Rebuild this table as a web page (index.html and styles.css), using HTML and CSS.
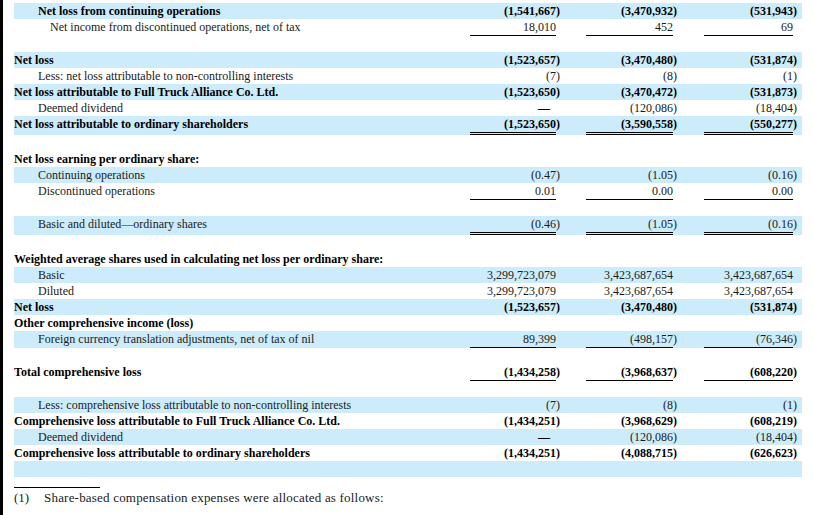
FILE: index.html
```html
<!DOCTYPE html>
<html>
<head>
<meta charset="utf-8">
<link rel="stylesheet" href="styles.css">
</head>
<body>
<div class="page">
  <div class="table">
    <div class="row shade b"><div class="lbl i1">Net loss from continuing operations</div><div class="num">(1,541,667</div><div class="par">)</div><div></div><div class="num">(3,470,932</div><div class="par">)</div><div></div><div class="num">(531,943</div><div class="par">)</div></div>
    <div class="row"><div class="lbl i2">Net income from discontinued operations, net of tax</div><div class="num ul">18,010</div><div class="par"></div><div></div><div class="num ul">452</div><div class="par"></div><div></div><div class="num ul">69</div><div class="par"></div></div>
    <div class="spacer"></div>
    <div class="row shade b"><div class="lbl">Net loss</div><div class="num">(1,523,657</div><div class="par">)</div><div></div><div class="num">(3,470,480</div><div class="par">)</div><div></div><div class="num">(531,874</div><div class="par">)</div></div>
    <div class="row"><div class="lbl i1">Less: net loss attributable to non-controlling interests</div><div class="num">(7</div><div class="par">)</div><div></div><div class="num">(8</div><div class="par">)</div><div></div><div class="num">(1</div><div class="par">)</div></div>
    <div class="row shade b"><div class="lbl">Net loss attributable to Full Truck Alliance Co. Ltd.</div><div class="num">(1,523,650</div><div class="par">)</div><div></div><div class="num">(3,470,472</div><div class="par">)</div><div></div><div class="num">(531,873</div><div class="par">)</div></div>
    <div class="row"><div class="lbl i1">Deemed dividend</div><div class="num dash">—</div><div class="par"></div><div></div><div class="num">(120,086</div><div class="par">)</div><div></div><div class="num">(18,404</div><div class="par">)</div></div>
    <div class="row shade b"><div class="lbl">Net loss attributable to ordinary shareholders</div><div class="num dul">(1,523,650</div><div class="par">)</div><div></div><div class="num dul">(3,590,558</div><div class="par">)</div><div></div><div class="num dul">(550,277</div><div class="par">)</div></div>
    <div class="spacer"></div>
    <div class="row"><div class="lbl b">Net loss earning per ordinary share:</div></div>
    <div class="row shade"><div class="lbl i1">Continuing operations</div><div class="num">(0.47</div><div class="par">)</div><div></div><div class="num">(1.05</div><div class="par">)</div><div></div><div class="num">(0.16</div><div class="par">)</div></div>
    <div class="row"><div class="lbl i1">Discontinued operations</div><div class="num ul">0.01</div><div class="par"></div><div></div><div class="num ul">0.00</div><div class="par"></div><div></div><div class="num ul">0.00</div><div class="par"></div></div>
    <div class="spacer"></div>
    <div class="row shade"><div class="lbl i1">Basic and diluted—ordinary shares</div><div class="num dul">(0.46</div><div class="par">)</div><div></div><div class="num dul">(1.05</div><div class="par">)</div><div></div><div class="num dul">(0.16</div><div class="par">)</div></div>
    <div class="spacer"></div>
    <div class="row"><div class="lbl b">Weighted average shares used in calculating net loss per ordinary share:</div></div>
    <div class="row shade"><div class="lbl i1">Basic</div><div class="num">3,299,723,079</div><div class="par"></div><div></div><div class="num">3,423,687,654</div><div class="par"></div><div></div><div class="num">3,423,687,654</div><div class="par"></div></div>
    <div class="row"><div class="lbl i1">Diluted</div><div class="num">3,299,723,079</div><div class="par"></div><div></div><div class="num">3,423,687,654</div><div class="par"></div><div></div><div class="num">3,423,687,654</div><div class="par"></div></div>
    <div class="row shade b"><div class="lbl">Net loss</div><div class="num">(1,523,657</div><div class="par">)</div><div></div><div class="num">(3,470,480</div><div class="par">)</div><div></div><div class="num">(531,874</div><div class="par">)</div></div>
    <div class="row"><div class="lbl b">Other comprehensive income (loss)</div></div>
    <div class="row shade"><div class="lbl i1">Foreign currency translation adjustments, net of tax of nil</div><div class="num ul">89,399</div><div class="par"></div><div></div><div class="num ul">(498,157</div><div class="par">)</div><div></div><div class="num ul">(76,346</div><div class="par">)</div></div>
    <div class="spacer"></div>
    <div class="row b"><div class="lbl">Total comprehensive loss</div><div class="num ul">(1,434,258</div><div class="par">)</div><div></div><div class="num ul">(3,968,637</div><div class="par">)</div><div></div><div class="num ul">(608,220</div><div class="par">)</div></div>
    <div class="spacer"></div>
    <div class="row shade"><div class="lbl i1">Less: comprehensive loss attributable to non-controlling interests</div><div class="num">(7</div><div class="par">)</div><div></div><div class="num">(8</div><div class="par">)</div><div></div><div class="num">(1</div><div class="par">)</div></div>
    <div class="row b"><div class="lbl">Comprehensive loss attributable to Full Truck Alliance Co. Ltd.</div><div class="num">(1,434,251</div><div class="par">)</div><div></div><div class="num">(3,968,629</div><div class="par">)</div><div></div><div class="num">(608,219</div><div class="par">)</div></div>
    <div class="row shade"><div class="lbl i1">Deemed dividend</div><div class="num dash">—</div><div class="par"></div><div></div><div class="num">(120,086</div><div class="par">)</div><div></div><div class="num">(18,404</div><div class="par">)</div></div>
    <div class="row b"><div class="lbl">Comprehensive loss attributable to ordinary shareholders</div><div class="num">(1,434,251</div><div class="par">)</div><div></div><div class="num">(4,088,715</div><div class="par">)</div><div></div><div class="num">(626,623</div><div class="par">)</div></div>
    <div class="row shade"><div class="lbl"></div></div>
  </div>
  <div class="foot-rule"></div>
  <div class="footnote"><span class="fn-mark">(1)</span><span class="fn-text">Share-based compensation expenses were allocated as follows:</span></div>
</div>
</body>
</html>
```

FILE: styles.css
```css
html, body {
  margin: 0;
  padding: 0;
  background: #fff;
}
body {
  font-family: "Liberation Serif", "Times New Roman", serif;
  font-size: 12px;
  color: #1a1a1a;
}
.page {
  min-height: 515px;
  box-sizing: border-box;
  border-left: 3px solid #000;
  padding: 3px 0 0 11px;
}
.table {
  width: 788px;
}
.row {
  display: grid;
  grid-template-columns: 456px 86px 4px 26px 87px 4px 27px 89px 9px;
  min-height: 16px;
  line-height: 16px;
}
.shade {
  background: #ccecfb;
}
.spacer {
  height: 16px;
}
.b {
  font-weight: bold;
  color: #000;
}
.lbl {
  white-space: nowrap;
}
.i1 {
  padding-left: 24px;
}
.i2 {
  padding-left: 36px;
}
.num {
  text-align: right;
  white-space: nowrap;
}
.par {
  white-space: nowrap;
}
.dash {
  padding-right: 6px;
  font-weight: bold;
  color: #000;
}
.ul {
  border-bottom: 1px solid #000;
}
.dul {
  border-bottom: 3px double #000;
}
.foot-rule {
  width: 86px;
  height: 1px;
  background: #000;
  margin-top: 10px;
}
.footnote {
  display: flex;
  line-height: 16px;
  font-size: 13px;
  margin-top: 2px;
}
.fn-mark {
  width: 30px;
}
.fn-text {
  letter-spacing: 0.2px;
}
```
